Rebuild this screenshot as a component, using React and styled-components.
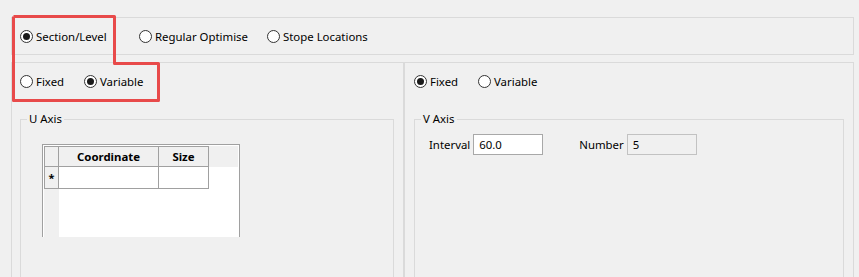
import React from "react";
import styled, { createGlobalStyle } from "styled-components";

const GlobalStyle = createGlobalStyle`
  html, body {
    margin: 0;
    padding: 0;
    background: #f0f0f0;
    overflow: hidden;
    height: 277px;
  }
  body {
    font-family: "Noto Sans", "Open Sans", Arial, sans-serif;
    font-size: 11.4px;
    color: #000;
  }
`;

const Page = styled.div`
  position: relative;
  width: 843px;
  padding: 17px 0 0 11px;
`;

const Highlight = styled.svg`
  position: absolute;
  left: 0;
  top: 0;
  width: 859px;
  height: 277px;
  pointer-events: none;
  z-index: 5;
`;

const ModeBox = styled.div`
  box-sizing: border-box;
  height: 38px;
  border: 1px solid #dadada;
  display: flex;
  align-items: center;
  padding: 1px 0 0 8px;
`;

const RadioItem = styled.label`
  display: flex;
  align-items: center;
  gap: 3px;
  width: ${(p) => (p.$w ? `${p.$w}px` : "auto")};
  flex: none;
  height: 14px;
  line-height: 14px;
  white-space: nowrap;
`;

const Circle = styled.span`
  box-sizing: border-box;
  width: 13px;
  height: 13px;
  border-radius: 50%;
  border: 1px solid #333;
  background: #fff;
  display: flex;
  align-items: center;
  justify-content: center;
  flex: none;
  &::after {
    content: "";
    width: 7px;
    height: 7px;
    border-radius: 50%;
    background: ${(p) => (p.$on ? "#1a1a1a" : "transparent")};
  }
`;

const Radio = ({ label, on, w }) => (
  <RadioItem $w={w}>
    <Circle $on={on} />
    <span>{label}</span>
  </RadioItem>
);

const Split = styled.div`
  display: flex;
  margin-top: 7px;
`;

const Panel = styled.div`
  box-sizing: border-box;
  width: ${(p) => p.$w}px;
  height: 240px;
  border: 1px solid #dadada;
  padding: 12px ${(p) => p.$pr}px 0 ${(p) => p.$pl}px;
  flex: none;
`;

const RadioRow = styled.div`
  display: flex;
  align-items: center;
  height: 13px;
  margin-bottom: 24px;
`;

const Group = styled.fieldset`
  box-sizing: border-box;
  margin: 0;
  min-width: 0;
  height: 200px;
  border: 1px solid #dadada;
  padding: 0;
`;

const Legend = styled.legend`
  margin-left: 6px;
  padding: 0 2px;
  line-height: 14px;
  height: 14px;
`;

const GroupBody = styled.div`
  padding: ${(p) => p.$pt}px 0 0 ${(p) => p.$pl}px;
`;

const TableFrame = styled.div`
  box-sizing: border-box;
  width: 198px;
  height: 93px;
  border: 1px solid #a0a0a0;
  border-bottom: none;
  padding: 1px 1px 0 1px;
  background: #fff;
  display: grid;
  grid-template-columns: 15px 100px 50px 1fr;
  grid-template-rows: 21px 22px 1fr;
`;

const HeadCell = styled.div`
  box-sizing: border-box;
  background: #f0f0f0;
  border-top: 1px solid #a0a0a0;
  border-bottom: 1px solid #a0a0a0;
  border-right: 1px solid #a0a0a0;
  border-left: ${(p) => (p.$first ? "1px solid #a0a0a0" : "none")};
  font-weight: 700;
  display: flex;
  align-items: center;
  justify-content: center;
  line-height: 14px;
`;

const HeadFill = styled.div`
  background: #f0f0f0;
`;

const BodyCell = styled.div`
  box-sizing: border-box;
  background: ${(p) => (p.$rowHead ? "#f0f0f0" : "#fff")};
  border-bottom: 1px solid #a0a0a0;
  border-right: 1px solid #a0a0a0;
  border-left: ${(p) => (p.$rowHead ? "1px solid #a0a0a0" : "none")};
  font-weight: 700;
  display: flex;
  align-items: center;
  justify-content: center;
  font-size: 11px;
`;

const RowHeadFill = styled.div`
  background: #f0f0f0;
`;

const BlankFill = styled.div`
  grid-column: span 3;
  background: #fff;
`;

const EmptyCell = styled.div`
  background: #fff;
`;

const FieldRow = styled.div`
  display: flex;
  align-items: center;
  gap: 36px;
`;

const Field = styled.div`
  display: flex;
  align-items: center;
  gap: 3px;
`;

const TextBox = styled.div`
  box-sizing: border-box;
  width: 70px;
  height: 21px;
  border: 1px solid ${(p) => (p.$readonly ? "#c2c2c2" : "#a8a8a8")};
  background: ${(p) => (p.$readonly ? "#f0f0f0" : "#fff")};
  padding: 0 5px;
  display: flex;
  align-items: center;
  line-height: 14px;
`;

export default function App() {
  return (
    <>
      <GlobalStyle />
      <Page>
        <Highlight viewBox="0 0 859 277">
          <polyline
            points="13.5,16.5 114.5,16.5 114.5,63.5 158.5,63.5 158.5,100.5 13.5,100.5 13.5,16.5"
            fill="none"
            stroke="#e84a4a"
            strokeWidth="3"
            strokeLinejoin="round"
          />
        </Highlight>
        <ModeBox>
          <Radio label="Section/Level" on w={119} />
          <Radio label="Regular Optimise" w={128} />
          <Radio label="Stope Locations" />
        </ModeBox>
        <Split>
          <Panel $w={393} $pl={8} $pr={9}>
            <RadioRow>
              <Radio label="Fixed" w={64} />
              <Radio label="Variable" on />
            </RadioRow>
            <Group>
              <Legend>U Axis</Legend>
              <GroupBody $pt={18} $pl={21}>
                <TableFrame>
                  <HeadCell $first />
                  <HeadCell>Coordinate</HeadCell>
                  <HeadCell>Size</HeadCell>
                  <HeadFill />
                  <BodyCell $rowHead>*</BodyCell>
                  <BodyCell />
                  <BodyCell />
                  <EmptyCell />
                  <RowHeadFill />
                  <BlankFill />
                </TableFrame>
              </GroupBody>
            </Group>
          </Panel>
          <Panel $w={450} $pl={9} $pr={9}>
            <RadioRow>
              <Radio label="Fixed" on w={64} />
              <Radio label="Variable" />
            </RadioRow>
            <Group>
              <Legend>V Axis</Legend>
              <GroupBody $pt={8} $pl={14}>
                <FieldRow>
                  <Field>
                    <span>Interval</span>
                    <TextBox>60.0</TextBox>
                  </Field>
                  <Field>
                    <span>Number</span>
                    <TextBox $readonly>5</TextBox>
                  </Field>
                </FieldRow>
              </GroupBody>
            </Group>
          </Panel>
        </Split>
      </Page>
    </>
  );
}
